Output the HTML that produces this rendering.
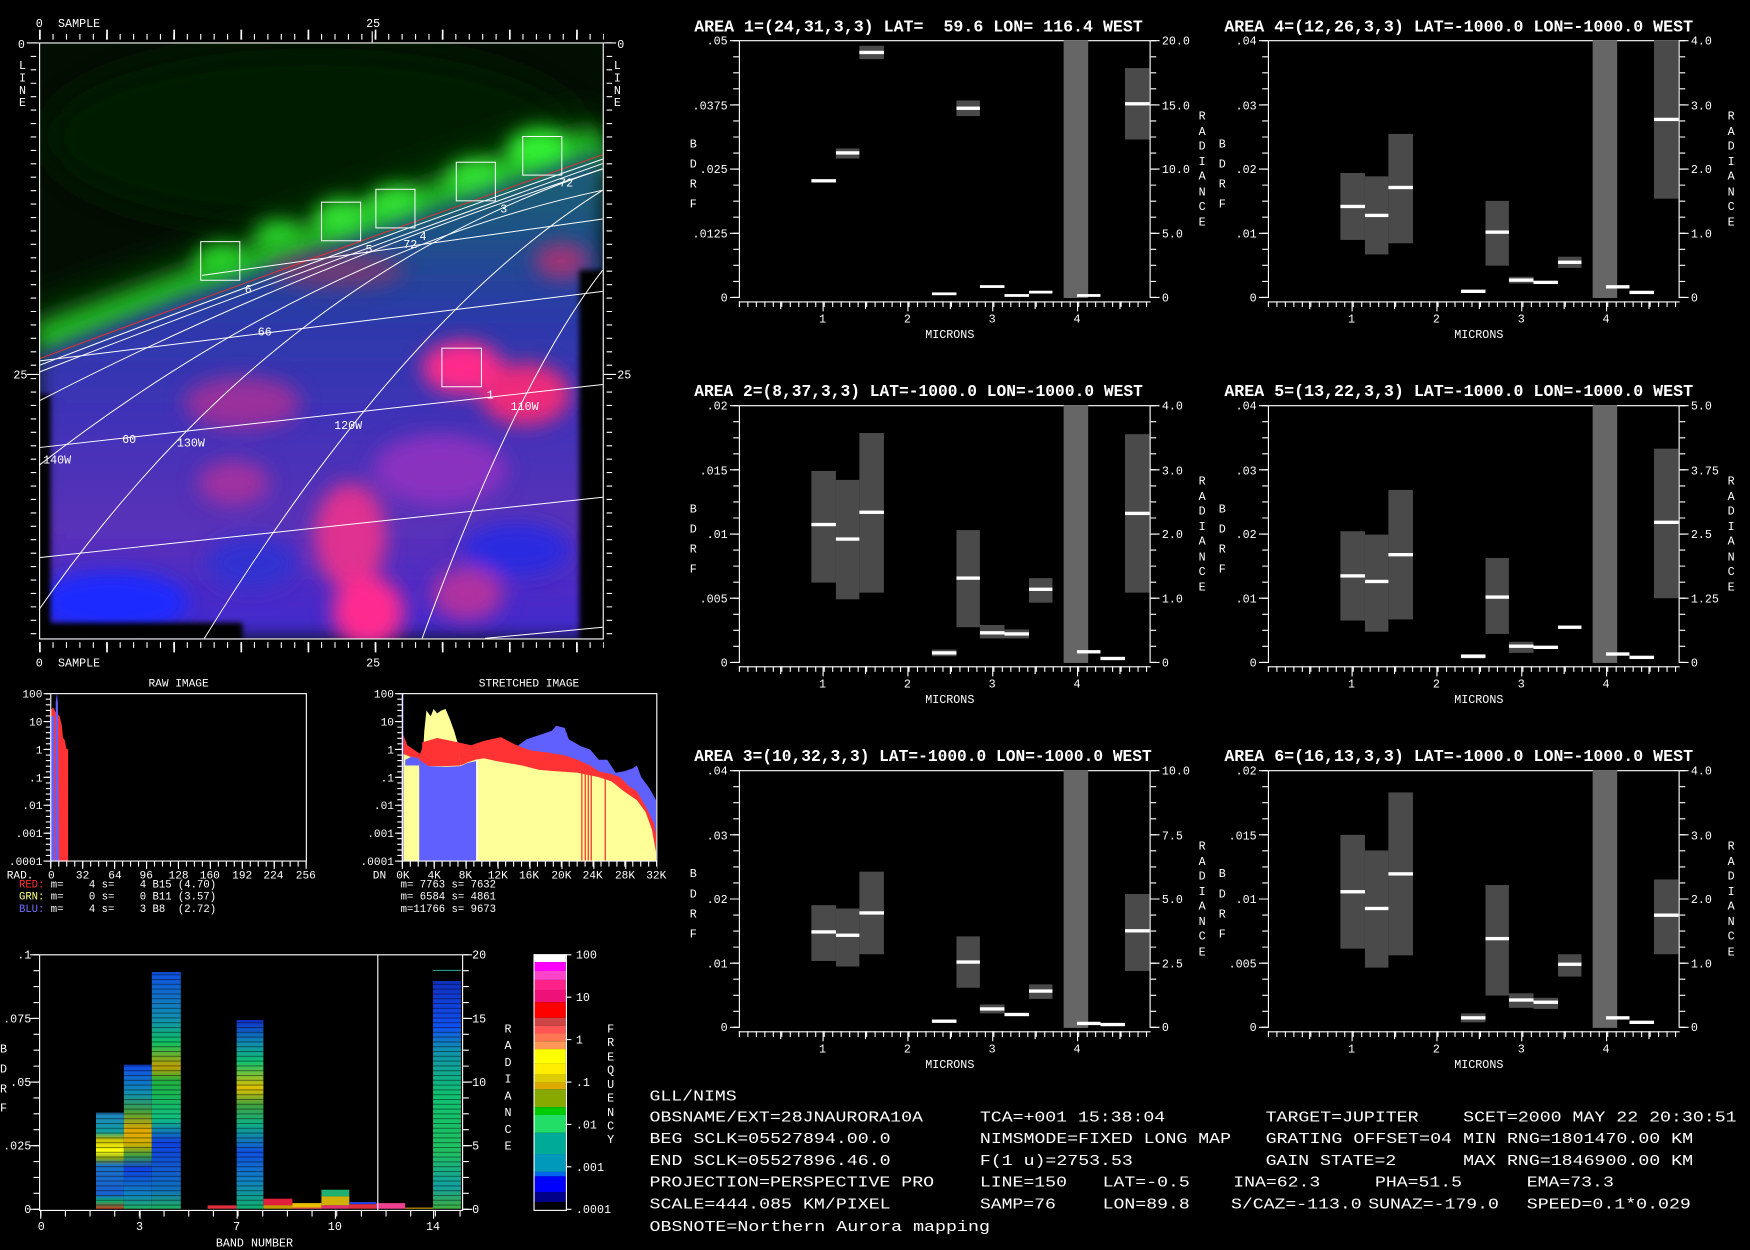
<!DOCTYPE html>
<html><head><meta charset="utf-8"><style>
html,body{margin:0;padding:0;background:#000;width:1750px;height:1250px;overflow:hidden}
svg{display:block}
text{white-space:pre;font-family:"Liberation Mono",monospace;fill:#fff}
</style></head><body>
<svg width="1750" height="1250" viewBox="0 0 1568 1120" preserveAspectRatio="none" xmlns="http://www.w3.org/2000/svg">
<defs>
<filter id="bl" x="-30%" y="-30%" width="160%" height="160%"><feGaussianBlur stdDeviation="22"/></filter>
<filter id="bl2" x="-30%" y="-30%" width="160%" height="160%"><feGaussianBlur stdDeviation="40"/></filter>
<filter id="bl3"><feGaussianBlur stdDeviation="6"/></filter>
<clipPath id="ic"><rect x="87" y="87" width="1255" height="1343"/></clipPath>
<linearGradient id="bodyg" gradientUnits="userSpaceOnUse" x1="0" y1="450" x2="0" y2="1430">
<stop offset="0" stop-color="#1a5a7a"/><stop offset="0.25" stop-color="#2a3aa8"/><stop offset="0.5" stop-color="#4032b8"/><stop offset="0.75" stop-color="#5a30b8"/><stop offset="1" stop-color="#4028d0"/></linearGradient>
<linearGradient id="gA" x1="0" y1="0" x2="0" y2="1">
<stop offset="0" stop-color="#2080c0"/><stop offset="0.2" stop-color="#10a0a0"/><stop offset="0.28" stop-color="#c8c000"/><stop offset="0.4" stop-color="#ffff10"/><stop offset="0.48" stop-color="#80a020"/><stop offset="0.55" stop-color="#1a70c8"/><stop offset="0.85" stop-color="#1a60d0"/><stop offset="0.92" stop-color="#10b070"/><stop offset="1" stop-color="#c04020"/></linearGradient>
<linearGradient id="gB" x1="0" y1="0" x2="0" y2="1">
<stop offset="0" stop-color="#1048e8"/><stop offset="0.2" stop-color="#1090b0"/><stop offset="0.32" stop-color="#40a040"/><stop offset="0.45" stop-color="#e0a800"/><stop offset="0.55" stop-color="#d0b000"/><stop offset="0.63" stop-color="#40a040"/><stop offset="0.72" stop-color="#1040e0"/><stop offset="0.9" stop-color="#1080c0"/><stop offset="1" stop-color="#20b060"/></linearGradient>
<linearGradient id="gC" x1="0" y1="0" x2="0" y2="1">
<stop offset="0" stop-color="#1050e0"/><stop offset="0.2" stop-color="#1090b0"/><stop offset="0.3" stop-color="#10c060"/><stop offset="0.4" stop-color="#c0a000"/><stop offset="0.46" stop-color="#20b040"/><stop offset="0.62" stop-color="#10c080"/><stop offset="0.72" stop-color="#1040e0"/><stop offset="0.92" stop-color="#1070c0"/><stop offset="1" stop-color="#20b060"/></linearGradient>
<linearGradient id="gD" x1="0" y1="0" x2="0" y2="1">
<stop offset="0" stop-color="#1030d0"/><stop offset="0.12" stop-color="#1088b0"/><stop offset="0.22" stop-color="#10c070"/><stop offset="0.36" stop-color="#e0c000"/><stop offset="0.45" stop-color="#40a040"/><stop offset="0.55" stop-color="#10b080"/><stop offset="0.7" stop-color="#1050e0"/><stop offset="0.85" stop-color="#1080c0"/><stop offset="1" stop-color="#10b070"/></linearGradient>
<linearGradient id="gE" x1="0" y1="0" x2="0" y2="1">
<stop offset="0" stop-color="#1030c0"/><stop offset="0.2" stop-color="#1050f0"/><stop offset="0.3" stop-color="#1090b0"/><stop offset="0.5" stop-color="#10c070"/><stop offset="0.75" stop-color="#20c060"/><stop offset="0.9" stop-color="#10a0a0"/><stop offset="1" stop-color="#40b040"/></linearGradient>
<pattern id="str" width="10" height="4.3" patternUnits="userSpaceOnUse"><rect width="10" height="0.9" fill="#000" opacity="0.45"/></pattern>
<g id="ax" stroke="#fff" fill="none" stroke-width="1">
<path d="M662,36.5H1031M662.5,36V267M1030.5,36V267M662,270.5H1031"/>
<line x1="659.5" y1="36" x2="659.5" y2="268" stroke-width="5" stroke-dasharray="1 13.375"/>
<line x1="658" y1="36" x2="658" y2="268" stroke-width="8" stroke-dasharray="1 56.5"/>
<line x1="1033.5" y1="36" x2="1033.5" y2="268" stroke-width="5" stroke-dasharray="1 13.375"/>
<line x1="1035" y1="36" x2="1035" y2="268" stroke-width="8" stroke-dasharray="1 56.5"/>
<line x1="662" y1="272.5" x2="1032" y2="272.5" stroke-width="5" stroke-dasharray="1 6.6"/>
<path d="M737.5,270V279M813.5,270V279M889.5,270V279M965.5,270V279M699.5,270V277M775.5,270V277M851.5,270V277M927.5,270V277M1003.5,270V277"/>
</g>
</defs>

<!-- ========== IMAGE ========== -->
<g transform="translate(35,38) scale(0.4024,0.3976) translate(-87,-87)">
<g clip-path="url(#ic)">
<rect x="87" y="87" width="1255" height="1343" fill="#020e02"/>
<ellipse cx="700" cy="300" rx="600" ry="200" fill="#041a04" filter="url(#bl2)"/>
<path d="M87,770 Q700,550 1342,320" stroke="#0c4a0c" stroke-width="150" fill="none" filter="url(#bl2)"/>
<path d="M87,765 Q700,540 1342,315" stroke="#20b820" stroke-width="80" fill="none" filter="url(#bl)"/>
<g filter="url(#bl)">
<ellipse cx="1200" cy="330" rx="70" ry="50" fill="#30f030"/>
<ellipse cx="1060" cy="395" rx="65" ry="45" fill="#30e030"/>
<ellipse cx="880" cy="455" rx="60" ry="45" fill="#30e030"/>
<ellipse cx="760" cy="485" rx="60" ry="45" fill="#30e030"/>
<ellipse cx="620" cy="525" rx="55" ry="40" fill="#28c828"/>
<ellipse cx="490" cy="580" rx="55" ry="40" fill="#28d028"/>
</g>
<polygon points="87,790 400,665 700,560 1000,450 1300,345 1342,335 1342,1430 87,1430" fill="url(#bodyg)" filter="url(#bl)"/>
<g filter="url(#bl)">
<ellipse cx="750" cy="600" rx="150" ry="40" fill="#a03060" opacity="0.6"/>
<ellipse cx="1250" cy="580" rx="60" ry="40" fill="#c03070" opacity="0.8"/>
<ellipse cx="1030" cy="820" rx="90" ry="60" fill="#ff2a8a"/>
<ellipse cx="1170" cy="880" rx="100" ry="70" fill="#ee2a7a"/>
<ellipse cx="540" cy="900" rx="130" ry="60" fill="#c03090" opacity="0.7"/>
<ellipse cx="780" cy="1200" rx="80" ry="120" fill="#e03090"/>
<ellipse cx="820" cy="1370" rx="80" ry="80" fill="#ff2a90"/>
<ellipse cx="520" cy="1080" rx="80" ry="50" fill="#a030a0"/>
<ellipse cx="980" cy="1050" rx="150" ry="80" fill="#8a30c0"/>
<ellipse cx="250" cy="1350" rx="170" ry="70" fill="#1a2aff"/>
<ellipse cx="1150" cy="1230" rx="120" ry="60" fill="#2a2ae0"/>
<ellipse cx="560" cy="1260" rx="100" ry="60" fill="#3030d0"/>
<ellipse cx="1040" cy="1330" rx="80" ry="60" fill="#b030a0"/>
</g>
<g fill="#000" filter="url(#bl3)">
<rect x="1290" y="600" width="70" height="850"/>
<rect x="70" y="880" width="42" height="560"/>
<rect x="70" y="1395" width="470" height="50"/>
</g>
</g>
<g fill="none" stroke="#fff" stroke-width="2.2">
<path d="M87,800 Q700,570 1342,340" stroke="#e03030"/>
<path d="M87,815 Q700,577 1342,350"/>
<path d="M87,830 Q700,590 1342,360"/>
<path d="M87,895 Q650,600 1342,372"/>
<path d="M87,1040 Q700,560 1342,420"/>
<path d="M87,1365 Q600,620 1342,372"/>
<path d="M455,1430 Q900,700 1342,420"/>
<path d="M940,1430 Q1150,850 1342,600"/>
<path d="M450,612 L1342,485"/>
<path d="M87,805 L1342,648"/>
<path d="M87,1000 L1342,858"/>
<path d="M87,1248 L1342,1112"/>
<path d="M1080,1430 L1342,1405"/>
<rect x="447" y="536" width="87" height="87"/>
<rect x="716" y="447" width="87" height="87"/>
<rect x="837" y="418" width="87" height="87"/>
<rect x="1016" y="357" width="87" height="87"/>
<rect x="1164" y="299" width="87" height="87"/>
<rect x="984" y="776" width="88" height="87"/>
</g>
<g font-size="26">
<text x="545" y="652">6</text><text x="814" y="562">5</text><text x="898" y="550">72</text><text x="934" y="532">4</text>
<text x="1114" y="470">3</text><text x="1245" y="412">72</text><text x="574" y="748">66</text><text x="1084" y="890">1</text>
<text x="1137" y="915">110W</text><text x="744" y="958">120W</text><text x="272" y="990">60</text><text x="394" y="998">130W</text><text x="96" y="1036">140W</text>
</g>
</g>
<!-- image frame & axes -->
<g stroke="#fff" fill="none">
<rect x="35.5" y="38.5" width="505" height="534"/>
<line x1="35" y1="33" x2="541" y2="33" stroke-width="5" stroke-dasharray="1 11.03"/>
<line x1="35" y1="31" x2="541" y2="31" stroke-width="9" stroke-dasharray="1.5 58.65"/>
<line x1="35" y1="578" x2="541" y2="578" stroke-width="5" stroke-dasharray="1 11.03"/>
<line x1="35" y1="580" x2="541" y2="580" stroke-width="9" stroke-dasharray="1.5 58.65"/>
<line x1="30" y1="38" x2="30" y2="573" stroke-width="5" stroke-dasharray="1 11.03"/>
<line x1="546" y1="38" x2="546" y2="573" stroke-width="5" stroke-dasharray="1 11.03"/>
<path d="M24,38.5H35M24,335.5H35M541,38.5H552M541,335.5H552M333.5,28V38"/>
</g>
<g font-size="10.5">
<text x="32" y="24">0</text><text x="52" y="24">SAMPLE</text><text x="328" y="24">25</text>
<text x="16" y="43">0</text><text x="12" y="339">25</text><text x="553" y="43">0</text><text x="553" y="339">25</text>
<text x="17" y="62">L</text><text x="17" y="73">I</text><text x="17" y="84">N</text><text x="17" y="95">E</text>
<text x="550" y="62">L</text><text x="550" y="73">I</text><text x="550" y="84">N</text><text x="550" y="95">E</text>
<text x="32" y="597">0</text><text x="52" y="597">SAMPLE</text><text x="328" y="597">25</text>
</g>

<!-- ========== HISTOGRAMS ========== -->
<g font-size="10">
<text x="160" y="615" text-anchor="middle">RAW IMAGE</text>
<text x="474" y="615" text-anchor="middle">STRETCHED IMAGE</text>
</g>
<g transform="translate(45,621) scale(0.382,0.2595) translate(-118,-70)">
<path d="M118,648 L118,130 125,120 130,135 140,150 145,180 148,225 152,232 156,262 160,264 160,648Z" fill="#ff3333"/>
<rect x="118" y="150" width="9" height="498" fill="#6060ff"/>
<path d="M129,648 L131,100 134,70 136,110 138,648Z" fill="#6060ff"/>
</g>
<g transform="translate(360,621) scale(0.381,0.2595) translate(-937,-70)">
<path d="M1110,648 L1130,250 1160,240 1200,262 1230,230 1260,215 1290,200 1300,183 1320,190 1330,230 1360,255 1380,265 1400,300 1420,300 1440,345 1460,340 1480,330 1490,320 1500,360 1520,400 1535,440 L1535,648Z" fill="#6060ff"/>
<path d="M937,648 L937,200 950,250 965,265 980,280 990,240 1020,225 1050,235 1070,240 1100,250 1130,235 1170,222 1200,245 1220,258 1240,268 1280,275 1320,285 1350,300 1380,320 1400,340 1430,350 1450,360 1470,390 1490,410 1510,460 1530,520 1535,560 L1535,648Z" fill="#ff3333"/>
<path d="M937,648 L937,340 980,330 985,320 990,200 995,130 1005,150 1012,125 1020,140 1030,130 1040,125 1050,160 1060,200 1070,250 1075,320 1090,310 1110,300 1130,295 1160,305 1200,315 1220,320 1260,335 1300,340 1350,345 1400,360 1430,375 1460,410 1490,440 1510,480 1525,540 1535,620 L1535,648Z" fill="#ffff99"/>
<path d="M985,240 L1020,225 1070,240 1075,320 1040,322 985,322Z" fill="#ff3333"/>
<path d="M940,648 L940,280 960,292 978,300 978,648Z" fill="#ffff99"/>
<path d="M945,300 L960,290 978,295 978,320 945,320Z" fill="#6060ff"/>
<path d="M978,648 L978,300 1000,322 1040,325 1075,322 1090,312 1112,305 1112,648Z" fill="#6060ff"/>
<rect x="937" y="70" width="4" height="578" fill="#6060ff"/>
<rect x="1112" y="300" width="4" height="348" fill="#fff"/>
<g fill="#ff3333"><rect x="1359" y="340" width="3" height="308"/><rect x="1367" y="340" width="3" height="308"/><rect x="1374" y="345" width="3" height="303"/><rect x="1381" y="345" width="3" height="303"/><rect x="1414" y="350" width="3" height="298"/></g>
</g>
<g stroke="#fff" fill="none">
<rect x="45.5" y="621.5" width="229" height="150"/>
<rect x="360.5" y="621.5" width="228" height="150"/>
<line x1="42" y1="621" x2="42" y2="772" stroke-width="6" stroke-dasharray="1 24"/>
<line x1="43" y1="621" x2="43" y2="772" stroke-width="4" stroke-dasharray="1 4"/>
<line x1="357" y1="621" x2="357" y2="772" stroke-width="6" stroke-dasharray="1 24"/>
<line x1="358" y1="621" x2="358" y2="772" stroke-width="4" stroke-dasharray="1 4"/>
<line x1="45" y1="774" x2="275" y2="774" stroke-width="5" stroke-dasharray="1 6.15"/>
<line x1="45" y1="775" x2="275" y2="775" stroke-width="7" stroke-dasharray="1 27.6"/>
<line x1="360" y1="774" x2="589" y2="774" stroke-width="5" stroke-dasharray="1 6.12"/>
<line x1="360" y1="775" x2="589" y2="775" stroke-width="7" stroke-dasharray="1 27.6"/>
</g>
<g font-size="10">
<text x="38" y="625" text-anchor="end">100</text><text x="38" y="650" text-anchor="end">10</text><text x="38" y="675" text-anchor="end">1</text><text x="38" y="700" text-anchor="end">.1</text><text x="38" y="725" text-anchor="end">.01</text><text x="38" y="750" text-anchor="end">.001</text><text x="38" y="775" text-anchor="end">.0001</text>
<text x="353" y="625" text-anchor="end">100</text><text x="353" y="650" text-anchor="end">10</text><text x="353" y="675" text-anchor="end">1</text><text x="353" y="700" text-anchor="end">.1</text><text x="353" y="725" text-anchor="end">.01</text><text x="353" y="750" text-anchor="end">.001</text><text x="353" y="775" text-anchor="end">.0001</text>
<g text-anchor="middle"><text x="18" y="787">RAD.</text><text x="46" y="787">0</text><text x="74" y="787">32</text><text x="103" y="787">64</text><text x="131" y="787">96</text><text x="160" y="787">128</text><text x="188" y="787">160</text><text x="217" y="787">192</text><text x="245" y="787">224</text><text x="274" y="787">256</text>
<text x="340" y="787">DN</text><text x="361" y="787">0K</text><text x="389" y="787">4K</text><text x="417" y="787">8K</text><text x="446" y="787">12K</text><text x="474" y="787">16K</text><text x="503" y="787">20K</text><text x="531" y="787">24K</text><text x="560" y="787">28K</text><text x="588" y="787">32K</text></g>
</g>
<g font-size="9.5">
<text x="17" y="795"><tspan fill="#ff3030">RED:</tspan> m=    4 s=    4 B15 (4.70)</text>
<text x="17" y="806"><tspan fill="#ffff80">GRN:</tspan> m=    0 s=    0 B11 (3.57)</text>
<text x="17" y="817"><tspan fill="#7070ff">BLU:</tspan> m=    4 s=    3 B8  (2.72)</text>
<text x="359" y="795">m= 7763 s= 7632</text>
<text x="359" y="806">m= 6584 s= 4861</text>
<text x="359" y="817">m=11766 s= 9673</text>
</g>

<!-- ========== BAND CHART ========== -->
<g>
<rect x="86" y="997" width="25" height="86" fill="url(#gA)"/>
<rect x="111" y="954" width="25" height="129" fill="url(#gB)"/>
<rect x="136" y="871" width="26" height="212" fill="url(#gC)"/>
<rect x="212" y="914" width="24" height="169" fill="url(#gD)"/>
<rect x="388" y="879" width="25" height="204" fill="url(#gE)"/>
<rect x="388" y="869" width="25" height="1" fill="#2a9a8a"/>
<rect x="86" y="871" width="327" height="212" fill="url(#str)"/>
<rect x="186" y="1080" width="26" height="3" fill="#e03040"/>
<rect x="236" y="1074" width="26" height="7" fill="#e0203a"/><rect x="236" y="1080" width="26" height="3" fill="#c0a000"/>
<rect x="262" y="1078" width="26" height="5" fill="#e8c000"/><rect x="262" y="1082" width="26" height="1" fill="#e03060"/>
<rect x="288" y="1066" width="25" height="6" fill="#20b070"/><rect x="288" y="1072" width="25" height="8" fill="#d0b000"/><rect x="288" y="1080" width="25" height="3" fill="#e03070"/>
<rect x="313" y="1077" width="24" height="2" fill="#2040e0"/><rect x="313" y="1079" width="24" height="4" fill="#e03040"/>
<rect x="337" y="1078" width="26" height="5" fill="#f04090"/>
<rect x="363" y="1082" width="25" height="1" fill="#d0a000"/>
</g>
<g stroke="#fff" fill="none">
<path d="M35,855.5H415M35.5,855V1084M414.5,855V1084M35,1084.5H415M338.5,855V1084"/>
<line x1="32.5" y1="855" x2="32.5" y2="1085" stroke-width="5" stroke-dasharray="1 13.25"/>
<line x1="31" y1="855" x2="31" y2="1085" stroke-width="8" stroke-dasharray="1 56"/>
<line x1="417.5" y1="855" x2="417.5" y2="1085" stroke-width="5" stroke-dasharray="1 13.25"/>
<line x1="419" y1="855" x2="419" y2="1085" stroke-width="8" stroke-dasharray="1 56"/>
<line x1="36" y1="1087.5" x2="416" y2="1087.5" stroke-width="5" stroke-dasharray="1 21.1"/>
<path d="M36.5,1084V1092M125.5,1084V1092M212.5,1084V1092M300.5,1084V1092M388.5,1084V1092"/>
</g>
<g font-size="10.5">
<text x="28" y="859" text-anchor="end">.1</text><text x="28" y="916" text-anchor="end">.075</text><text x="28" y="973" text-anchor="end">.05</text><text x="28" y="1030" text-anchor="end">.025</text><text x="28" y="1087" text-anchor="end">0</text>
<text x="423" y="859">20</text><text x="423" y="916">15</text><text x="423" y="973">10</text><text x="423" y="1030">5</text><text x="423" y="1087">0</text>
<text x="0" y="943">B</text><text x="0" y="961">D</text><text x="0" y="979">R</text><text x="0" y="996">F</text>
<g text-anchor="middle"><text x="37" y="1102">0</text><text x="125" y="1102">3</text><text x="212" y="1102">7</text><text x="300" y="1102">10</text><text x="388" y="1102">14</text><text x="228" y="1117">BAND NUMBER</text></g>
<text x="452" y="925">R</text><text x="452" y="940">A</text><text x="452" y="955">D</text><text x="452" y="970">I</text><text x="452" y="985">A</text><text x="452" y="1000">N</text><text x="452" y="1015">C</text><text x="452" y="1030">E</text>
<text x="544" y="925">F</text><text x="544" y="937">R</text><text x="544" y="950">E</text><text x="544" y="962">Q</text><text x="544" y="975">U</text><text x="544" y="987">E</text><text x="544" y="1000">N</text><text x="544" y="1012">C</text><text x="544" y="1024">Y</text>
<text x="516" y="859">100</text><text x="516" y="897">10</text><text x="516" y="935">1</text><text x="516" y="973">.1</text><text x="516" y="1011">.01</text><text x="516" y="1049">.001</text><text x="516" y="1087">.0001</text>
</g>
<!-- colorbar -->
<g>
<rect x="478" y="855" width="29" height="7" fill="#fff"/><rect x="478" y="862" width="29" height="8" fill="#f0f"/><rect x="478" y="870" width="29" height="8" fill="#f4c"/><rect x="478" y="878" width="29" height="9" fill="#f28"/><rect x="478" y="887" width="29" height="11" fill="#e17"/><rect x="478" y="898" width="29" height="14" fill="#f00"/><rect x="478" y="912" width="29" height="7" fill="#c44"/><rect x="478" y="919" width="29" height="7" fill="#f55"/><rect x="478" y="926" width="29" height="7" fill="#f75"/><rect x="478" y="933" width="29" height="7" fill="#f95"/><rect x="478" y="940" width="29" height="13" fill="#ff0"/><rect x="478" y="953" width="29" height="10" fill="#fe0"/><rect x="478" y="963" width="29" height="7" fill="#dc0"/><rect x="478" y="970" width="29" height="6" fill="#da0"/><rect x="478" y="976" width="29" height="16" fill="#8a0"/><rect x="478" y="992" width="29" height="7" fill="#0c0"/><rect x="478" y="999" width="29" height="16" fill="#2d6"/><rect x="478" y="1015" width="29" height="19" fill="#0a9"/><rect x="478" y="1034" width="29" height="16" fill="#09b"/><rect x="478" y="1050" width="29" height="4" fill="#06e"/><rect x="478" y="1054" width="29" height="14" fill="#00f"/><rect x="478" y="1068" width="29" height="9" fill="#008"/>
<rect x="478.5" y="855.5" width="29" height="229" fill="none" stroke="#fff"/>
<path d="M507,855.5H512M507,893.5H512M507,931.5H512M507,969.5H512M507,1007.5H512M507,1045.5H512M507,1083.5H512" stroke="#fff"/>
</g>

<!-- ========== AREA PLOTS ========== -->
<use href="#ax"/>
<use href="#ax" transform="translate(474,0)"/>
<use href="#ax" transform="translate(0,327)"/>
<use href="#ax" transform="translate(474,327)"/>
<use href="#ax" transform="translate(0,654)"/>
<use href="#ax" transform="translate(474,654)"/>

<g font-size="15" font-weight="bold">
<text x="622" y="28" textLength="402" lengthAdjust="spacingAndGlyphs">AREA 1=(24,31,3,3) LAT=  59.6 LON= 116.4 WEST</text>
<text x="1097" y="28" textLength="420" lengthAdjust="spacingAndGlyphs">AREA 4=(12,26,3,3) LAT=-1000.0 LON=-1000.0 WEST</text>
<text x="622" y="355" textLength="402" lengthAdjust="spacingAndGlyphs">AREA 2=(8,37,3,3) LAT=-1000.0 LON=-1000.0 WEST</text>
<text x="1097" y="355" textLength="420" lengthAdjust="spacingAndGlyphs">AREA 5=(13,22,3,3) LAT=-1000.0 LON=-1000.0 WEST</text>
<text x="622" y="682" textLength="410" lengthAdjust="spacingAndGlyphs">AREA 3=(10,32,3,3) LAT=-1000.0 LON=-1000.0 WEST</text>
<text x="1097" y="682" textLength="420" lengthAdjust="spacingAndGlyphs">AREA 6=(16,13,3,3) LAT=-1000.0 LON=-1000.0 WEST</text>
</g>

<g font-size="10.5">
<g>
<text x="652" y="40" text-anchor="end">.05</text><text x="652" y="98" text-anchor="end">.0375</text><text x="652" y="155" text-anchor="end">.025</text><text x="652" y="213" text-anchor="end">.0125</text><text x="652" y="270" text-anchor="end">0</text>
<text x="1041" y="40">20.0</text><text x="1041" y="98">15.0</text><text x="1041" y="155">10.0</text><text x="1041" y="213">5.0</text><text x="1041" y="270">0</text>
</g>
<g transform="translate(474,0)">
<text x="652" y="40" text-anchor="end">.04</text><text x="652" y="98" text-anchor="end">.03</text><text x="652" y="155" text-anchor="end">.02</text><text x="652" y="213" text-anchor="end">.01</text><text x="652" y="270" text-anchor="end">0</text>
<text x="1041" y="40">4.0</text><text x="1041" y="98">3.0</text><text x="1041" y="155">2.0</text><text x="1041" y="213">1.0</text><text x="1041" y="270">0</text>
</g>
<g transform="translate(0,327)">
<text x="652" y="40" text-anchor="end">.02</text><text x="652" y="98" text-anchor="end">.015</text><text x="652" y="155" text-anchor="end">.01</text><text x="652" y="213" text-anchor="end">.005</text><text x="652" y="270" text-anchor="end">0</text>
<text x="1041" y="40">4.0</text><text x="1041" y="98">3.0</text><text x="1041" y="155">2.0</text><text x="1041" y="213">1.0</text><text x="1041" y="270">0</text>
</g>
<g transform="translate(474,327)">
<text x="652" y="40" text-anchor="end">.04</text><text x="652" y="98" text-anchor="end">.03</text><text x="652" y="155" text-anchor="end">.02</text><text x="652" y="213" text-anchor="end">.01</text><text x="652" y="270" text-anchor="end">0</text>
<text x="1041" y="40">5.0</text><text x="1041" y="98">3.75</text><text x="1041" y="155">2.5</text><text x="1041" y="213">1.25</text><text x="1041" y="270">0</text>
</g>
<g transform="translate(0,654)">
<text x="652" y="40" text-anchor="end">.04</text><text x="652" y="98" text-anchor="end">.03</text><text x="652" y="155" text-anchor="end">.02</text><text x="652" y="213" text-anchor="end">.01</text><text x="652" y="270" text-anchor="end">0</text>
<text x="1041" y="40">10.0</text><text x="1041" y="98">7.5</text><text x="1041" y="155">5.0</text><text x="1041" y="213">2.5</text><text x="1041" y="270">0</text>
</g>
<g transform="translate(474,654)">
<text x="652" y="40" text-anchor="end">.02</text><text x="652" y="98" text-anchor="end">.015</text><text x="652" y="155" text-anchor="end">.01</text><text x="652" y="213" text-anchor="end">.005</text><text x="652" y="270" text-anchor="end">0</text>
<text x="1041" y="40">4.0</text><text x="1041" y="98">3.0</text><text x="1041" y="155">2.0</text><text x="1041" y="213">1.0</text><text x="1041" y="270">0</text>
</g>
</g>
<g font-size="10.5">
<g><text x="737" y="289" text-anchor="middle">1</text><text x="813" y="289" text-anchor="middle">2</text><text x="889" y="289" text-anchor="middle">3</text><text x="965" y="289" text-anchor="middle">4</text><text x="851" y="303" text-anchor="middle">MICRONS</text>
<text x="618" y="132">B</text><text x="618" y="150">D</text><text x="618" y="168">R</text><text x="618" y="186">F</text>
<text x="1074" y="107">R</text><text x="1074" y="121">A</text><text x="1074" y="134">D</text><text x="1074" y="148">I</text><text x="1074" y="161">A</text><text x="1074" y="175">N</text><text x="1074" y="188">C</text><text x="1074" y="202">E</text></g>
<g transform="translate(474,0)"><text x="737" y="289" text-anchor="middle">1</text><text x="813" y="289" text-anchor="middle">2</text><text x="889" y="289" text-anchor="middle">3</text><text x="965" y="289" text-anchor="middle">4</text><text x="851" y="303" text-anchor="middle">MICRONS</text>
<text x="618" y="132">B</text><text x="618" y="150">D</text><text x="618" y="168">R</text><text x="618" y="186">F</text>
<text x="1074" y="107">R</text><text x="1074" y="121">A</text><text x="1074" y="134">D</text><text x="1074" y="148">I</text><text x="1074" y="161">A</text><text x="1074" y="175">N</text><text x="1074" y="188">C</text><text x="1074" y="202">E</text></g>
<g transform="translate(0,327)"><text x="737" y="289" text-anchor="middle">1</text><text x="813" y="289" text-anchor="middle">2</text><text x="889" y="289" text-anchor="middle">3</text><text x="965" y="289" text-anchor="middle">4</text><text x="851" y="303" text-anchor="middle">MICRONS</text>
<text x="618" y="132">B</text><text x="618" y="150">D</text><text x="618" y="168">R</text><text x="618" y="186">F</text>
<text x="1074" y="107">R</text><text x="1074" y="121">A</text><text x="1074" y="134">D</text><text x="1074" y="148">I</text><text x="1074" y="161">A</text><text x="1074" y="175">N</text><text x="1074" y="188">C</text><text x="1074" y="202">E</text></g>
<g transform="translate(474,327)"><text x="737" y="289" text-anchor="middle">1</text><text x="813" y="289" text-anchor="middle">2</text><text x="889" y="289" text-anchor="middle">3</text><text x="965" y="289" text-anchor="middle">4</text><text x="851" y="303" text-anchor="middle">MICRONS</text>
<text x="618" y="132">B</text><text x="618" y="150">D</text><text x="618" y="168">R</text><text x="618" y="186">F</text>
<text x="1074" y="107">R</text><text x="1074" y="121">A</text><text x="1074" y="134">D</text><text x="1074" y="148">I</text><text x="1074" y="161">A</text><text x="1074" y="175">N</text><text x="1074" y="188">C</text><text x="1074" y="202">E</text></g>
<g transform="translate(0,654)"><text x="737" y="289" text-anchor="middle">1</text><text x="813" y="289" text-anchor="middle">2</text><text x="889" y="289" text-anchor="middle">3</text><text x="965" y="289" text-anchor="middle">4</text><text x="851" y="303" text-anchor="middle">MICRONS</text>
<text x="618" y="132">B</text><text x="618" y="150">D</text><text x="618" y="168">R</text><text x="618" y="186">F</text>
<text x="1074" y="107">R</text><text x="1074" y="121">A</text><text x="1074" y="134">D</text><text x="1074" y="148">I</text><text x="1074" y="161">A</text><text x="1074" y="175">N</text><text x="1074" y="188">C</text><text x="1074" y="202">E</text></g>
<g transform="translate(474,654)"><text x="737" y="289" text-anchor="middle">1</text><text x="813" y="289" text-anchor="middle">2</text><text x="889" y="289" text-anchor="middle">3</text><text x="965" y="289" text-anchor="middle">4</text><text x="851" y="303" text-anchor="middle">MICRONS</text>
<text x="618" y="132">B</text><text x="618" y="150">D</text><text x="618" y="168">R</text><text x="618" y="186">F</text>
<text x="1074" y="107">R</text><text x="1074" y="121">A</text><text x="1074" y="134">D</text><text x="1074" y="148">I</text><text x="1074" y="161">A</text><text x="1074" y="175">N</text><text x="1074" y="188">C</text><text x="1074" y="202">E</text></g>
</g>

<!-- Area 1 -->
<g>
<g fill="#4a4a4a">
<rect x="749" y="133" width="21" height="9"/><rect x="770" y="41" width="22" height="12"/><rect x="857" y="90" width="21" height="14"/><rect x="1008" y="61" width="22" height="64"/>
</g>
<rect x="953" y="36" width="22" height="231" fill="#666"/>
<g fill="#fff">
<rect x="727" y="160.5" width="22" height="3"/><rect x="749" y="135.5" width="21" height="3"/><rect x="770" y="45.5" width="22" height="3"/><rect x="857" y="95.5" width="21" height="3"/><rect x="1008" y="91.5" width="22" height="3"/>
<rect x="835" y="262" width="22" height="2.5"/><rect x="878" y="255.5" width="22" height="2.5"/><rect x="900" y="263.5" width="22" height="2.5"/><rect x="922" y="260.5" width="21" height="2.5"/><rect x="965" y="263.5" width="21" height="2.5"/>
</g>
</g>
<!-- Area 4 -->
<g transform="translate(474,0)">
<g fill="#4a4a4a">
<rect x="727" y="155" width="22" height="60"/><rect x="749" y="158" width="21" height="70"/><rect x="770" y="120" width="22" height="98"/><rect x="857" y="180" width="21" height="58"/><rect x="878" y="248" width="22" height="6"/><rect x="922" y="230" width="21" height="10"/><rect x="1008" y="36" width="22" height="142"/>
</g>
<rect x="953" y="36" width="22" height="231" fill="#666"/>
<g fill="#fff">
<rect x="727" y="183.5" width="22" height="3"/><rect x="749" y="191.5" width="21" height="3"/><rect x="770" y="166.5" width="22" height="3"/><rect x="835" y="259.5" width="22" height="3"/><rect x="857" y="206.5" width="21" height="3"/><rect x="878" y="249.5" width="22" height="3"/><rect x="900" y="251.5" width="22" height="3"/><rect x="922" y="233.5" width="21" height="3"/><rect x="965" y="255.5" width="21" height="3"/><rect x="986" y="260.5" width="22" height="3"/><rect x="1008" y="105.5" width="22" height="3"/>
</g>
</g>
<!-- Area 2 -->
<g>
<g fill="#4a4a4a">
<rect x="727" y="422" width="22" height="100"/><rect x="749" y="430" width="21" height="107"/><rect x="770" y="388" width="22" height="143"/><rect x="835" y="582" width="22" height="6"/><rect x="857" y="475" width="21" height="87"/><rect x="878" y="560" width="22" height="12"/><rect x="900" y="564" width="22" height="8"/><rect x="922" y="518" width="21" height="22"/><rect x="1008" y="389" width="22" height="142"/>
</g>
<rect x="953" y="363" width="22" height="231" fill="#666"/>
<g fill="#fff">
<rect x="727" y="468.5" width="22" height="3"/><rect x="749" y="481.5" width="21" height="3"/><rect x="770" y="457.5" width="22" height="3"/><rect x="835" y="583.5" width="22" height="3"/><rect x="857" y="516.5" width="21" height="3"/><rect x="878" y="565.5" width="22" height="3"/><rect x="900" y="566.5" width="22" height="3"/><rect x="922" y="526.5" width="21" height="3"/><rect x="965" y="582.5" width="21" height="3"/><rect x="986" y="588.5" width="22" height="3"/><rect x="1008" y="458.5" width="22" height="3"/>
</g>
</g>
<!-- Area 5 -->
<g transform="translate(474,0)">
<g fill="#4a4a4a">
<rect x="727" y="476" width="22" height="80"/><rect x="749" y="479" width="21" height="87"/><rect x="770" y="439" width="22" height="116"/><rect x="835" y="586" width="22" height="4"/><rect x="857" y="500" width="21" height="68"/><rect x="878" y="575" width="22" height="10"/><rect x="1008" y="402" width="22" height="134"/>
</g>
<rect x="953" y="363" width="22" height="231" fill="#666"/>
<g fill="#fff">
<rect x="727" y="514.5" width="22" height="3"/><rect x="749" y="519.5" width="21" height="3"/><rect x="770" y="495.5" width="22" height="3"/><rect x="835" y="586.5" width="22" height="3"/><rect x="857" y="533.5" width="21" height="3"/><rect x="878" y="577.5" width="22" height="3"/><rect x="900" y="578.5" width="22" height="3"/><rect x="922" y="560.5" width="21" height="3"/><rect x="965" y="584.5" width="21" height="3"/><rect x="986" y="587.5" width="22" height="3"/><rect x="1008" y="466.5" width="22" height="3"/>
</g>
</g>
<!-- Area 3 -->
<g>
<g fill="#4a4a4a">
<rect x="727" y="811" width="22" height="50"/><rect x="749" y="814" width="21" height="52"/><rect x="770" y="781" width="22" height="74"/><rect x="857" y="839" width="21" height="46"/><rect x="878" y="900" width="22" height="8"/><rect x="922" y="882" width="21" height="13"/><rect x="1008" y="801" width="22" height="69"/>
</g>
<rect x="953" y="690" width="22" height="231" fill="#666"/>
<g fill="#fff">
<rect x="727" y="833.5" width="22" height="3"/><rect x="749" y="836.5" width="21" height="3"/><rect x="770" y="816.5" width="22" height="3"/><rect x="835" y="913.5" width="22" height="3"/><rect x="857" y="860.5" width="21" height="3"/><rect x="878" y="902.5" width="22" height="3"/><rect x="900" y="907.5" width="22" height="3"/><rect x="922" y="886.5" width="21" height="3"/><rect x="965" y="915.5" width="21" height="3"/><rect x="986" y="916.5" width="22" height="3"/><rect x="1008" y="832.5" width="22" height="3"/>
</g>
</g>
<!-- Area 6 -->
<g transform="translate(474,0)">
<g fill="#4a4a4a">
<rect x="727" y="748" width="22" height="102"/><rect x="749" y="762" width="21" height="105"/><rect x="770" y="710" width="22" height="146"/><rect x="835" y="908" width="22" height="8"/><rect x="857" y="793" width="21" height="99"/><rect x="878" y="890" width="22" height="13"/><rect x="900" y="894" width="22" height="10"/><rect x="922" y="855" width="21" height="20"/><rect x="1008" y="788" width="22" height="67"/>
</g>
<rect x="953" y="690" width="22" height="231" fill="#666"/>
<g fill="#fff">
<rect x="727" y="797.5" width="22" height="3"/><rect x="749" y="812.5" width="21" height="3"/><rect x="770" y="781.5" width="22" height="3"/><rect x="835" y="910.5" width="22" height="3"/><rect x="857" y="839.5" width="21" height="3"/><rect x="878" y="894.5" width="22" height="3"/><rect x="900" y="896.5" width="22" height="3"/><rect x="922" y="862.5" width="21" height="3"/><rect x="965" y="910.5" width="21" height="3"/><rect x="986" y="914.5" width="22" height="3"/><rect x="1008" y="818.5" width="22" height="3"/>
</g>
</g>

<!-- ========== BOTTOM INFO ========== -->
<g font-size="13.5">
<text x="582" y="986" textLength="78" lengthAdjust="spacingAndGlyphs">GLL/NIMS</text>
<text x="582" y="1005" textLength="245" lengthAdjust="spacingAndGlyphs">OBSNAME/EXT=28JNAURORA10A</text>
<text x="878" y="1005" textLength="166" lengthAdjust="spacingAndGlyphs">TCA=+001 15:38:04</text>
<text x="1134" y="1005" textLength="137" lengthAdjust="spacingAndGlyphs">TARGET=JUPITER</text>
<text x="1311" y="1005" textLength="245" lengthAdjust="spacingAndGlyphs">SCET=2000 MAY 22 20:30:51</text>
<text x="582" y="1024" textLength="216" lengthAdjust="spacingAndGlyphs">BEG SCLK=05527894.00.0</text>
<text x="878" y="1024" textLength="225" lengthAdjust="spacingAndGlyphs">NIMSMODE=FIXED LONG MAP</text>
<text x="1134" y="1024" textLength="167" lengthAdjust="spacingAndGlyphs">GRATING OFFSET=04</text>
<text x="1311" y="1024" textLength="206" lengthAdjust="spacingAndGlyphs">MIN RNG=1801470.00 KM</text>
<text x="582" y="1044" textLength="216" lengthAdjust="spacingAndGlyphs">END SCLK=05527896.46.0</text>
<text x="878" y="1044" textLength="137" lengthAdjust="spacingAndGlyphs">F(1 u)=2753.53</text>
<text x="1134" y="1044" textLength="117" lengthAdjust="spacingAndGlyphs">GAIN STATE=2</text>
<text x="1311" y="1044" textLength="206" lengthAdjust="spacingAndGlyphs">MAX RNG=1846900.00 KM</text>
<text x="582" y="1063" textLength="255" lengthAdjust="spacingAndGlyphs">PROJECTION=PERSPECTIVE PRO</text>
<text x="878" y="1063" textLength="78" lengthAdjust="spacingAndGlyphs">LINE=150</text>
<text x="988" y="1063" textLength="78" lengthAdjust="spacingAndGlyphs">LAT=-0.5</text>
<text x="1105" y="1063" textLength="78" lengthAdjust="spacingAndGlyphs">INA=62.3</text>
<text x="1232" y="1063" textLength="78" lengthAdjust="spacingAndGlyphs">PHA=51.5</text>
<text x="1368" y="1063" textLength="78" lengthAdjust="spacingAndGlyphs">EMA=73.3</text>
<text x="582" y="1083" textLength="216" lengthAdjust="spacingAndGlyphs">SCALE=444.085 KM/PIXEL</text>
<text x="878" y="1083" textLength="68" lengthAdjust="spacingAndGlyphs">SAMP=76</text>
<text x="988" y="1083" textLength="78" lengthAdjust="spacingAndGlyphs">LON=89.8</text>
<text x="1103" y="1083" textLength="117" lengthAdjust="spacingAndGlyphs">S/CAZ=-113.0</text>
<text x="1226" y="1083" textLength="117" lengthAdjust="spacingAndGlyphs">SUNAZ=-179.0</text>
<text x="1368" y="1083" textLength="147" lengthAdjust="spacingAndGlyphs">SPEED=0.1*0.029</text>
<text x="582" y="1103" textLength="305" lengthAdjust="spacingAndGlyphs">OBSNOTE=Northern Aurora mapping</text>
</g>
</svg>
</body></html>
